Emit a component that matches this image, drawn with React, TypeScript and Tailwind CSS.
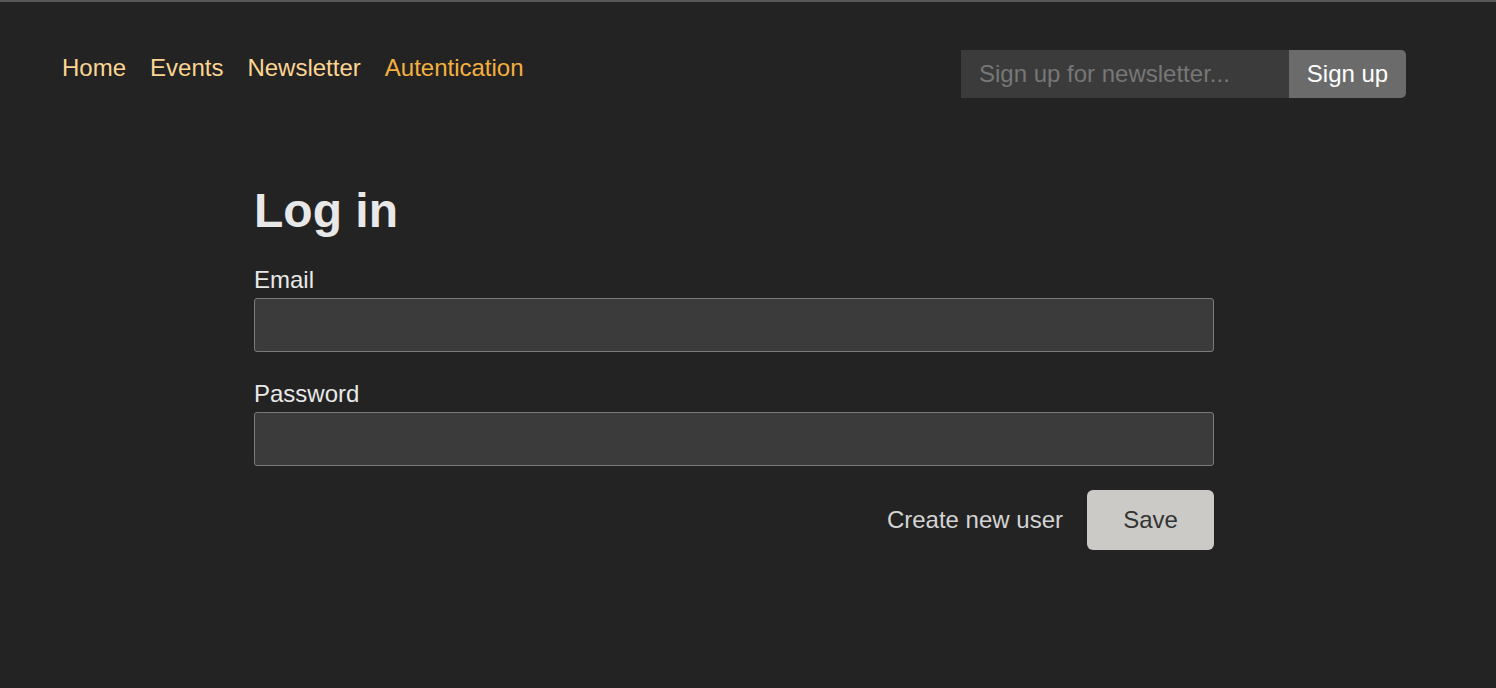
import React from 'react';

const navLinks = [
  { label: 'Home', active: false },
  { label: 'Events', active: false },
  { label: 'Newsletter', active: false },
  { label: 'Autentication', active: true },
];

const Header = () => (
  <header className="flex items-start justify-between pt-[48px] pl-[62px] pr-[90px]">
    <nav className="flex gap-6 text-[24px] leading-[36px]">
      {navLinks.map((link) => (
        <a
          key={link.label}
          href="#"
          className={link.active ? 'text-[#f5b03e]' : 'text-[#fcd592]'}
        >
          {link.label}
        </a>
      ))}
    </nav>
    <form className="flex h-12" onSubmit={(e) => e.preventDefault()}>
      <input
        type="email"
        placeholder="Sign up for newsletter..."
        className="w-[328px] bg-[#3b3b3b] px-[18px] text-[24px] text-white placeholder:text-[#777777] outline-none"
      />
      <button className="w-[117px] rounded-r-[5px] bg-[#6b6b6b] text-[24px] text-white">Sign up</button>
    </form>
  </header>
);

const Field = ({ label, type }: { label: string; type: string }) => (
  <label className="flex flex-col">
    <span className="text-[24px] leading-[36px] text-[#e8e8e8]">{label}</span>
    <input
      type={type}
      className="h-[54px] rounded-[3px] border border-[#7a7a7a] bg-[#3b3b3b] px-3 text-[24px] text-white outline-none"
    />
  </label>
);

export default function App() {
  return (
    <div
      className="min-h-[688px] border-t-2 border-[#575757] bg-[#232323]"
      style={{ fontFamily: '"Liberation Sans", Arial, sans-serif' }}
    >
      <Header />
      <main className="ml-[254px] w-[960px] pt-[84px]">
        <h1 className="text-[48px] font-bold leading-[58px] text-[#e8e8e8]">Log in</h1>
        <form className="mt-[22px] flex flex-col gap-6" onSubmit={(e) => e.preventDefault()}>
          <Field label="Email" type="email" />
          <Field label="Password" type="password" />
          <div className="flex items-center justify-end gap-6">
            <a href="#" className="text-[24px] text-[#d4d4d4]">Create new user</a>
            <button className="h-[60px] w-[127px] rounded-[6px] bg-[#cbcac6] text-[24px] text-[#333333]">Save</button>
          </div>
        </form>
      </main>
    </div>
  );
}
